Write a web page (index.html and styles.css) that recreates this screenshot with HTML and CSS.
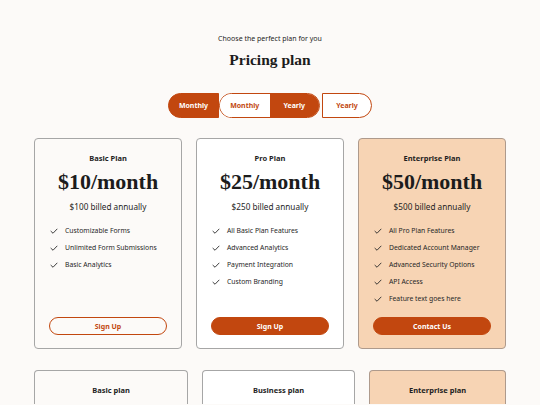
FILE: index.html
```html
<!DOCTYPE html>
<html lang="en">
<head>
<meta charset="utf-8">
<title>Pricing plan</title>
<link rel="stylesheet" href="styles.css">
</head>
<body>
<main class="page">
  <header class="hero">
    <p class="eyebrow">Choose the perfect plan for you</p>
    <h1 class="title">Pricing plan</h1>
  </header>

  <div class="toggles">
    <button class="seg seg-first">Monthly</button>
    <div class="seg-group">
      <button class="seg-half">Monthly</button>
      <button class="seg-half is-on">Yearly</button>
    </div>
    <button class="seg seg-last">Yearly</button>
  </div>

  <section class="plans">
    <article class="plan plan-basic">
      <h2 class="plan-name">Basic Plan</h2>
      <div class="price">$10/month</div>
      <div class="billed">$100 billed annually</div>
      <ul class="features">
        <li><svg class="check" viewBox="0 0 10 10"><path d="M1.2 5.4 L3.8 7.8 L8.8 2.6"/></svg>Customizable Forms</li>
        <li><svg class="check" viewBox="0 0 10 10"><path d="M1.2 5.4 L3.8 7.8 L8.8 2.6"/></svg>Unlimited Form Submissions</li>
        <li><svg class="check" viewBox="0 0 10 10"><path d="M1.2 5.4 L3.8 7.8 L8.8 2.6"/></svg>Basic Analytics</li>
      </ul>
      <button class="cta cta-outline">Sign Up</button>
    </article>

    <article class="plan plan-pro">
      <h2 class="plan-name">Pro Plan</h2>
      <div class="price">$25/month</div>
      <div class="billed">$250 billed annually</div>
      <ul class="features">
        <li><svg class="check" viewBox="0 0 10 10"><path d="M1.2 5.4 L3.8 7.8 L8.8 2.6"/></svg>All Basic Plan Features</li>
        <li><svg class="check" viewBox="0 0 10 10"><path d="M1.2 5.4 L3.8 7.8 L8.8 2.6"/></svg>Advanced Analytics</li>
        <li><svg class="check" viewBox="0 0 10 10"><path d="M1.2 5.4 L3.8 7.8 L8.8 2.6"/></svg>Payment Integration</li>
        <li><svg class="check" viewBox="0 0 10 10"><path d="M1.2 5.4 L3.8 7.8 L8.8 2.6"/></svg>Custom Branding</li>
      </ul>
      <button class="cta cta-fill">Sign Up</button>
    </article>

    <article class="plan plan-ent">
      <h2 class="plan-name">Enterprise Plan</h2>
      <div class="price">$50/month</div>
      <div class="billed">$500 billed annually</div>
      <ul class="features">
        <li><svg class="check" viewBox="0 0 10 10"><path d="M1.2 5.4 L3.8 7.8 L8.8 2.6"/></svg>All Pro Plan Features</li>
        <li><svg class="check" viewBox="0 0 10 10"><path d="M1.2 5.4 L3.8 7.8 L8.8 2.6"/></svg>Dedicated Account Manager</li>
        <li><svg class="check" viewBox="0 0 10 10"><path d="M1.2 5.4 L3.8 7.8 L8.8 2.6"/></svg>Advanced Security Options</li>
        <li><svg class="check" viewBox="0 0 10 10"><path d="M1.2 5.4 L3.8 7.8 L8.8 2.6"/></svg>API Access</li>
        <li><svg class="check" viewBox="0 0 10 10"><path d="M1.2 5.4 L3.8 7.8 L8.8 2.6"/></svg>Feature text goes here</li>
      </ul>
      <button class="cta cta-fill">Contact Us</button>
    </article>
  </section>

  <section class="plans-lower">
    <article class="mini mini-basic"><h2 class="mini-name">Basic plan</h2></article>
    <article class="mini mini-business"><h2 class="mini-name">Business plan</h2></article>
    <article class="mini mini-ent"><h2 class="mini-name">Enterprise plan</h2></article>
  </section>
</main>
</body>
</html>
```

FILE: styles.css
```css
* { box-sizing: border-box; }

html, body {
  margin: 0;
  padding: 0;
  background: #fcfaf8;
  color: #1c1c1c;
  font-family: "Noto Sans", "Open Sans", sans-serif;
  overflow: hidden;
}

.page {
  width: 540px;
  height: 405px;
  padding-top: 33px;
  display: flex;
  flex-direction: column;
  align-items: center;
  overflow: hidden;
}

.hero {
  display: flex;
  flex-direction: column;
  align-items: center;
}

.eyebrow {
  margin: 0;
  font-size: 7px;
  line-height: 12px;
  color: #1e1e1e;
}

.title {
  margin: 6px 0 0;
  font-family: "Liberation Serif", "Times New Roman", serif;
  font-weight: 700;
  font-size: 15.5px;
  line-height: 18px;
  color: #1c1c1c;
}

.toggles {
  margin-top: 24px;
  display: flex;
  align-items: center;
  height: 25px;
}

button {
  font-family: "Noto Sans", "Open Sans", sans-serif;
  cursor: pointer;
  line-height: 1;
}

.seg, .seg-half {
  display: block;
  height: 25px;
  font-size: 7px;
  font-weight: 700;
  border: 1px solid #c2470f;
  padding: 0;
  margin: 0;
}

.seg { width: 51px; }

.seg-first {
  border-radius: 13px 0 0 13px;
  background: #c2470f;
  color: #fff;
}

.seg-last {
  width: 50px;
  margin-left: 2px;
  border-radius: 0 13px 13px 0;
  background: #fff;
  color: #c2470f;
}

.seg-group {
  display: flex;
  width: 101px;
  height: 25px;
  border-radius: 13px;
  overflow: hidden;
  border: 1px solid #c2470f;
}

.seg-half {
  flex: 1;
  height: 23px;
  border: 0;
  background: #fff;
  color: #c2470f;
}

.seg-half.is-on {
  background: #c2470f;
  color: #fff;
}

.plans {
  margin-top: 20px;
  display: grid;
  grid-template-columns: 148px 148px 148px;
  column-gap: 14px;
}

.plan {
  height: 211px;
  border: 1px solid #a6a6a6;
  border-radius: 4px;
  padding: 13px 14px 14px;
  display: flex;
  flex-direction: column;
  align-items: center;
}

.plan-basic { background: #fcfaf8; }
.plan-pro { background: #ffffff; }
.plan-ent { background: #f7d4b4; border-color: #ae9a8c; }

.plan-name {
  margin: 0;
  font-size: 7.5px;
  font-weight: 700;
  line-height: 12px;
  color: #1e1e1e;
}

.price {
  margin-top: 6px;
  font-family: "Liberation Serif", "Times New Roman", serif;
  font-weight: 700;
  font-size: 22px;
  line-height: 24px;
  color: #1c1c1c;
}

.billed {
  margin-top: 7px;
  font-size: 8.2px;
  line-height: 12px;
  color: #1e1e1e;
}

.features {
  list-style: none;
  margin: 12px 0 0;
  padding: 0 0 0 1px;
  align-self: stretch;
  display: flex;
  flex-direction: column;
  gap: 5px;
}

.features li {
  display: flex;
  align-items: center;
  gap: 7px;
  font-size: 6.8px;
  line-height: 12px;
  color: #262626;
}

.check {
  width: 8px;
  height: 8px;
  flex: none;
  fill: none;
  stroke: #262626;
  stroke-width: 1.1;
  stroke-linecap: round;
  stroke-linejoin: round;
}

.cta {
  margin-top: auto;
  margin-bottom: -1px;
  align-self: stretch;
  height: 18px;
  border-radius: 9px;
  font-size: 7px;
  font-weight: 700;
  padding: 0;
}

.cta-outline {
  background: transparent;
  border: 1px solid #c2470f;
  color: #c2470f;
}

.cta-fill {
  background: #c2470f;
  border: 1px solid #c2470f;
  color: #fff;
}

.plans-lower {
  margin-top: 21px;
  display: grid;
  grid-template-columns: 154px 153px 137px;
  column-gap: 14px;
}

.mini {
  height: 34px;
  border: 1px solid #a6a6a6;
  border-bottom: 0;
  border-radius: 4px 4px 0 0;
  padding-top: 13px;
  display: flex;
  justify-content: center;
}

.mini-basic { background: #fcfaf8; }
.mini-business { background: #ffffff; }
.mini-ent { background: #f7d4b4; border-color: #ae9a8c; }

.mini-name {
  margin: 0;
  font-size: 7.5px;
  font-weight: 700;
  line-height: 12px;
  color: #1e1e1e;
}
```
